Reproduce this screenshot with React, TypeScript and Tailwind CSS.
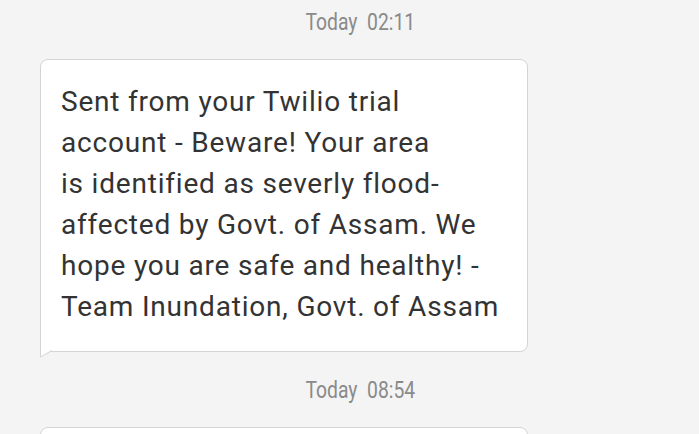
export default function App() {
  const lines = [
    "Sent from your Twilio trial",
    "account - Beware! Your area",
    "is identified as severly flood-",
    "affected by Govt. of Assam. We",
    "hope you are safe and healthy! -",
    "Team Inundation, Govt. of Assam",
  ];

  return (
    <div className="w-[699px] h-[434px] overflow-hidden bg-[#f4f4f4] font-['Roboto',sans-serif]">
      <div className="pl-[21px] pt-[10px] h-[59px] text-center">
        <span className="inline-block text-[23px] leading-[26px] text-[#8a8a8a] scale-x-[0.84]">Today&nbsp;&nbsp;02:11</span>
      </div>

      <div className="relative ml-[40px] w-[488px] bg-white border border-[#d4d4d4] rounded-[8px] rounded-bl-none pl-[20px] pt-[21px] pb-[24px] text-[28px] leading-[41px] tracking-[0.8px] text-[#333333]">
        {lines.map((l, i) => (
          <div key={i} className="whitespace-nowrap">{l}</div>
        ))}
        <svg className="absolute left-[-1px] top-full mt-[-1px]" width="14" height="8" viewBox="0 0 14 8">
          <path d="M0.5 0 L0.5 7 L12 0.5 Z" fill="#ffffff" />
          <path d="M0.5 0 L0.5 7 L12 0.5" fill="none" stroke="#d4d4d4" strokeWidth="1" />
        </svg>
      </div>

      <div className="pl-[21px] pt-[26px] h-[75px] text-center">
        <span className="inline-block text-[23px] leading-[26px] text-[#8a8a8a] scale-x-[0.84]">Today&nbsp;&nbsp;08:54</span>
      </div>

      <div className="ml-[40px] w-[488px] h-[60px] bg-white border border-[#d4d4d4] rounded-[8px]" />
    </div>
  );
}
